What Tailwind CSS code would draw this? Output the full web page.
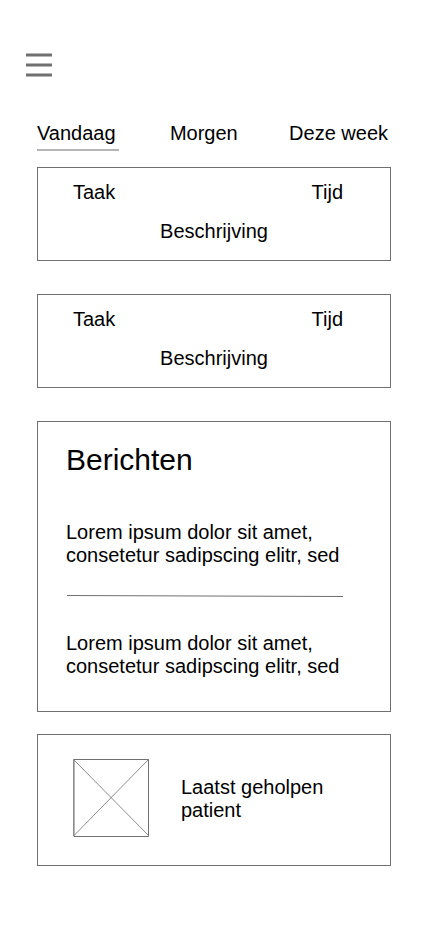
<!DOCTYPE html>
<html lang="nl">
<head>
<meta charset="utf-8">
<meta name="viewport" content="width=device-width, initial-scale=1">
<title>Taken</title>
<script src="https://cdn.jsdelivr.net/npm/@tailwindcss/browser@4"></script>
</head>
<body class="bg-white text-black text-[20px] leading-[23px] font-['Liberation_Sans',Arial,sans-serif]">
<header class="flex px-[26px] pt-[53px]">
  <button type="button" aria-label="Menu" class="block">
    <svg class="block w-[26px] h-[24px]" viewBox="0 0 26 24" fill="none" stroke="#707070" stroke-width="3"><path d="M0 2H26M0 12H26M0 22H26"/></svg>
  </button>
</header>
<main class="px-[37px] pt-[45px] pb-[60px]">
  <nav class="flex items-start justify-between pr-[3px] mb-4">
    <a href="#vandaag" aria-current="page" class="pr-[3px] pb-1 border-b-2 border-[#b5b5b5]">Vandaag</a>
    <a href="#morgen">Morgen</a>
    <a href="#week">Deze week</a>
  </nav>
  <div class="flex flex-col gap-[33px]">
    <article class="border border-[#707070] pt-[13px] pb-[17px]">
      <div class="flex justify-between pl-[35px] pr-[47px]"><h2>Taak</h2><span>Tijd</span></div>
      <p class="mt-4 text-center">Beschrijving</p>
    </article>
    <article class="border border-[#707070] pt-[13px] pb-[17px]">
      <div class="flex justify-between pl-[35px] pr-[47px]"><h2>Taak</h2><span>Tijd</span></div>
      <p class="mt-4 text-center">Beschrijving</p>
    </article>
    <section class="border border-[#707070] pt-[21px] pb-[33px] pl-[28px] pr-[47px]">
      <h2 class="text-[30px] leading-[34px] mb-11">Berichten</h2>
      <p>Lorem ipsum dolor sit amet, consetetur sadipscing elitr, sed</p>
      <svg class="block w-full h-[3px] mt-7 mb-[34px]" viewBox="0 0 277 3" preserveAspectRatio="none" stroke="#707070" aria-hidden="true"><path d="M1 .5L277 1.5"/></svg>
      <p>Lorem ipsum dolor sit amet, consetetur sadipscing elitr, sed</p>
    </section>
  </div>
  <section class="mt-[22px] border border-[#707070] flex items-start gap-8 pl-[35px] pr-[47px] pt-6 pb-[28px]">
    <svg class="block shrink-0 w-[76px] h-[78px]" viewBox="0 0 76 78" fill="none" stroke="#707070" role="img" aria-label="Foto van patient"><path d="M1 .5H75.5V77.5H1Z"/><path d="M.5 0V77" stroke-opacity=".6"/><path d="M1 1L75.500 76.500M75.500 .5L1 76.500" stroke-width=".8"/></svg>
    <p class="pt-[17px]">Laatst geholpen patient</p>
  </section>
</main>
</body>
</html>
